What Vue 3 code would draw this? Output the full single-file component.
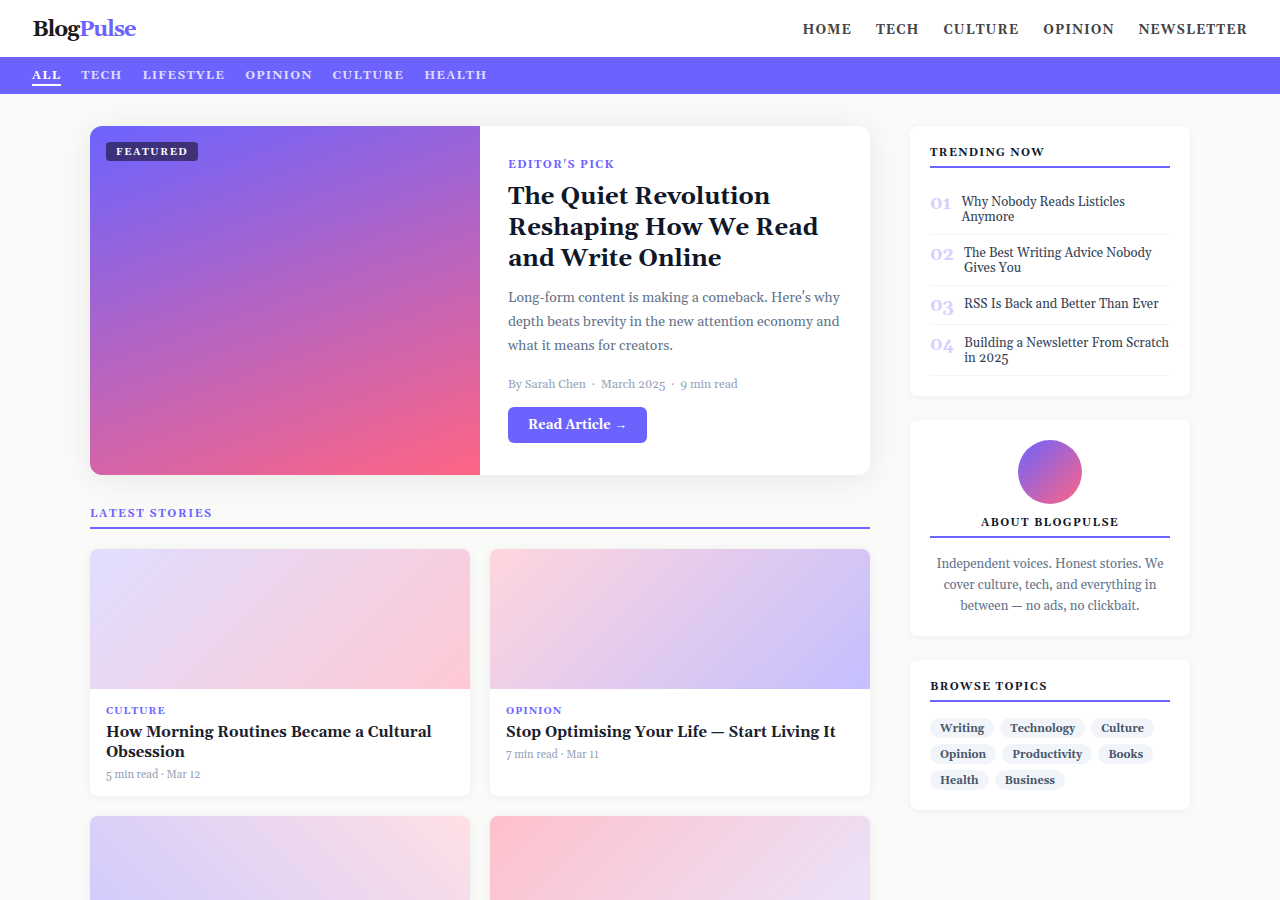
<script setup>
const navLinks = ['Home', 'Tech', 'Culture', 'Opinion', 'Newsletter']
const categories = ['All', 'Tech', 'Lifestyle', 'Opinion', 'Culture', 'Health']
const stories = [
  { tag: 'Culture', title: 'How Morning Routines Became a Cultural Obsession', meta: '5 min read · Mar 12', art: 'art-a' },
  { tag: 'Opinion', title: 'Stop Optimising Your Life — Start Living It', meta: '7 min read · Mar 11', art: 'art-b' },
  { tag: '', title: '', meta: '', art: 'art-c' },
  { tag: '', title: '', meta: '', art: 'art-d' },
]
const trending = [
  'Why Nobody Reads Listicles Anymore',
  'The Best Writing Advice Nobody Gives You',
  'RSS Is Back and Better Than Ever',
  'Building a Newsletter From Scratch in 2025',
]
const topics = ['Writing', 'Technology', 'Culture', 'Opinion', 'Productivity', 'Books', 'Health', 'Business']
</script>

<template>
  <div class="page">
    <header class="header">
      <a class="logo" href="#">Blog<span>Pulse</span></a>
      <nav class="nav" aria-label="Main">
        <a v-for="link in navLinks" :key="link" href="#">{{ link }}</a>
      </nav>
    </header>

    <nav class="categories" aria-label="Categories">
      <a v-for="(cat, i) in categories" :key="cat" href="#" :class="{ active: i === 0 }">{{ cat }}</a>
    </nav>

    <div class="layout">
      <main>
        <article class="hero">
          <div class="hero-art"><span class="badge">Featured</span></div>
          <div class="hero-body">
            <div class="eyebrow">Editor's Pick</div>
            <h1>The Quiet Revolution Reshaping How We Read and Write Online</h1>
            <p>Long-form content is making a comeback. Here's why depth beats brevity in the new attention economy and what it means for creators.</p>
            <div class="byline">By Sarah Chen &nbsp;·&nbsp; March 2025 &nbsp;·&nbsp; 9 min read</div>
            <button class="read" type="button">Read Article <span class="arrow">→</span></button>
          </div>
        </article>

        <h2 class="section-title">Latest Stories</h2>
        <div class="stories">
          <article v-for="story in stories" :key="story.art" class="story">
            <div class="story-art" :class="story.art"></div>
            <div v-if="story.title" class="story-body">
              <div class="story-tag">{{ story.tag }}</div>
              <h3>{{ story.title }}</h3>
              <div class="story-meta">{{ story.meta }}</div>
            </div>
          </article>
        </div>
      </main>

      <aside class="sidebar">
        <section class="widget">
          <h2>Trending Now</h2>
          <ol class="trending">
            <li v-for="(item, i) in trending" :key="item">
              <span class="rank">0{{ i + 1 }}</span>
              <a href="#">{{ item }}</a>
            </li>
          </ol>
        </section>

        <section class="widget about">
          <div class="avatar"></div>
          <h2>About BlogPulse</h2>
          <p>Independent voices. Honest stories. We cover culture, tech, and everything in between — no ads, no clickbait.</p>
        </section>

        <section class="widget">
          <h2>Browse Topics</h2>
          <div class="topics">
            <a v-for="topic in topics" :key="topic" href="#">{{ topic }}</a>
          </div>
        </section>
      </aside>
    </div>
  </div>
</template>

<style>
body {
  margin: 0;
  background: #fafaf8;
}
</style>

<style scoped>
.page {
  min-height: 100vh;
  background: #fafaf8;
  color: #1a1a1a;
  font-family: Georgia, Gelasio, "Liberation Serif", serif;
}
.page * {
  box-sizing: border-box;
}
a {
  color: inherit;
  text-decoration: none;
}
h1, h2, h3, p, ol {
  margin: 0;
  padding: 0;
}
.header {
  display: flex;
  align-items: center;
  justify-content: space-between;
  padding: 16px 32px 14px;
  background: #fff;
}
.logo {
  padding-top: 2px;
  font-size: 22px;
  line-height: 25px;
  font-weight: 700;
  letter-spacing: -1px;
}
.logo span {
  color: #6c63ff;
}
.nav {
  display: flex;
  gap: 24px;
  color: #444;
  font-size: 13px;
  font-weight: 700;
  letter-spacing: 0.08em;
  text-transform: uppercase;
}
.categories {
  display: flex;
  gap: 20px;
  padding: 11px 32px 8px;
  background: #6c63ff;
  color: rgba(255, 255, 255, 0.8);
  font-size: 12px;
  line-height: 15px;
  font-weight: 700;
  letter-spacing: 0.1em;
  text-transform: uppercase;
}
.categories a {
  padding-bottom: 1px;
  border-bottom: 2px solid transparent;
}
.categories .active {
  color: #fff;
  border-color: #fff;
}
.layout {
  display: grid;
  grid-template-columns: minmax(0, 1fr) 280px;
  gap: 40px;
  max-width: 1100px;
  margin: 32px auto;
}
.hero {
  display: grid;
  grid-template-columns: 1fr 1fr;
  overflow: hidden;
  border-radius: 12px;
  background: #fff;
  box-shadow: 0 4px 32px rgba(0, 0, 0, 0.08);
}
.hero-art {
  padding: 16px;
  background: linear-gradient(160deg, #6c63ff 0%, #ff6584 100%);
}
.badge {
  display: block;
  width: fit-content;
  padding: 5px 10px 3px;
  border-radius: 4px;
  background: rgba(0, 0, 0, 0.5);
  color: #fff;
  font-size: 10px;
  line-height: 11px;
  font-weight: 700;
  letter-spacing: 0.15em;
  text-transform: uppercase;
}
.hero-body {
  display: flex;
  flex-direction: column;
  align-items: flex-start;
  justify-content: center;
  padding: 33px 28px 32px;
}
.eyebrow {
  margin-bottom: 11px;
  color: #6c63ff;
  font-size: 11px;
  line-height: 12px;
  font-weight: 700;
  letter-spacing: 0.12em;
  text-transform: uppercase;
}
.hero h1 {
  margin-bottom: 12px;
  color: #0f172a;
  font-size: 24px;
  line-height: 31px;
  font-weight: 700;
}
.hero p {
  margin-bottom: 20px;
  color: #64748b;
  font-size: 14px;
  line-height: 1.7;
}
.byline {
  margin-bottom: 15px;
  color: #94a3b8;
  font-size: 12px;
  line-height: 14px;
}
.read {
  padding: 10px 20px;
  border: 0;
  border-radius: 6px;
  background: #6c63ff;
  color: #fff;
  font-family: inherit;
  font-size: 13px;
  line-height: 16px;
  font-weight: 700;
}
.arrow {
  font-family: "Liberation Serif", serif;
  font-weight: 400;
}
.section-title {
  margin: 33px 0 20px;
  padding-bottom: 7px;
  border-bottom: 2px solid #6c63ff;
  color: #6c63ff;
  font-size: 11px;
  line-height: 12px;
  font-weight: 700;
  letter-spacing: 0.14em;
  text-transform: uppercase;
}
.stories {
  display: grid;
  grid-template-columns: 1fr 1fr;
  gap: 20px;
}
.story {
  overflow: hidden;
  border-radius: 8px;
  background: #fff;
  box-shadow: 0 1px 8px rgba(0, 0, 0, 0.06);
}
.story-art {
  height: 140px;
}
.art-a {
  background: linear-gradient(135deg, #e0deff, #ffc9d4);
}
.art-b {
  background: linear-gradient(135deg, #ffd6dd, #c4bfff);
}
.art-c {
  background: linear-gradient(45deg, #cdc9ff, #ffe0e5);
}
.art-d {
  background: linear-gradient(135deg, #ffc0cb, #e8e6ff);
}
.story-body {
  padding: 16px 16px 15px;
}
.story-tag {
  margin-bottom: 6px;
  color: #6c63ff;
  font-size: 10px;
  line-height: 12px;
  font-weight: 700;
  letter-spacing: 0.1em;
  text-transform: uppercase;
}
.story h3 {
  margin-bottom: 6px;
  color: #1a202c;
  font-size: 15px;
  line-height: 20px;
  font-weight: 700;
}
.story-meta {
  color: #94a3b8;
  font-size: 11px;
  line-height: 12px;
}
.sidebar {
  display: flex;
  flex-direction: column;
  gap: 24px;
}
.widget {
  padding: 20px;
  border-radius: 8px;
  background: #fff;
  box-shadow: 0 1px 8px rgba(0, 0, 0, 0.05);
}
.widget h2 {
  margin-bottom: 16px;
  padding: 1px 0 7px;
  border-bottom: 2px solid #6c63ff;
  color: #0f172a;
  font-size: 11px;
  line-height: 12px;
  font-weight: 700;
  letter-spacing: 0.12em;
  text-transform: uppercase;
}
.trending {
  list-style: none;
}
.trending li {
  display: flex;
  gap: 10px;
  padding: 11px 0 9px;
  border-bottom: 1px solid #f1f5f9;
  color: #334155;
  font-size: 13px;
  line-height: 15px;
}
.rank {
  color: #d4d0ff;
  font-size: 18px;
  line-height: 18px;
  font-weight: 700;
}
.about {
  text-align: center;
}
.avatar {
  width: 64px;
  height: 64px;
  margin: 0 auto 12px;
  border-radius: 50%;
  background: linear-gradient(135deg, #6c63ff, #ff6584);
}
.about p {
  color: #64748b;
  font-size: 13px;
  line-height: 1.6;
}
.topics {
  display: flex;
  flex-wrap: wrap;
  gap: 6px;
}
.topics a {
  padding: 5px 10px 3px;
  border-radius: 20px;
  background: #f1f5f9;
  color: #475569;
  font-size: 11px;
  line-height: 12px;
  font-weight: 700;
}
</style>
